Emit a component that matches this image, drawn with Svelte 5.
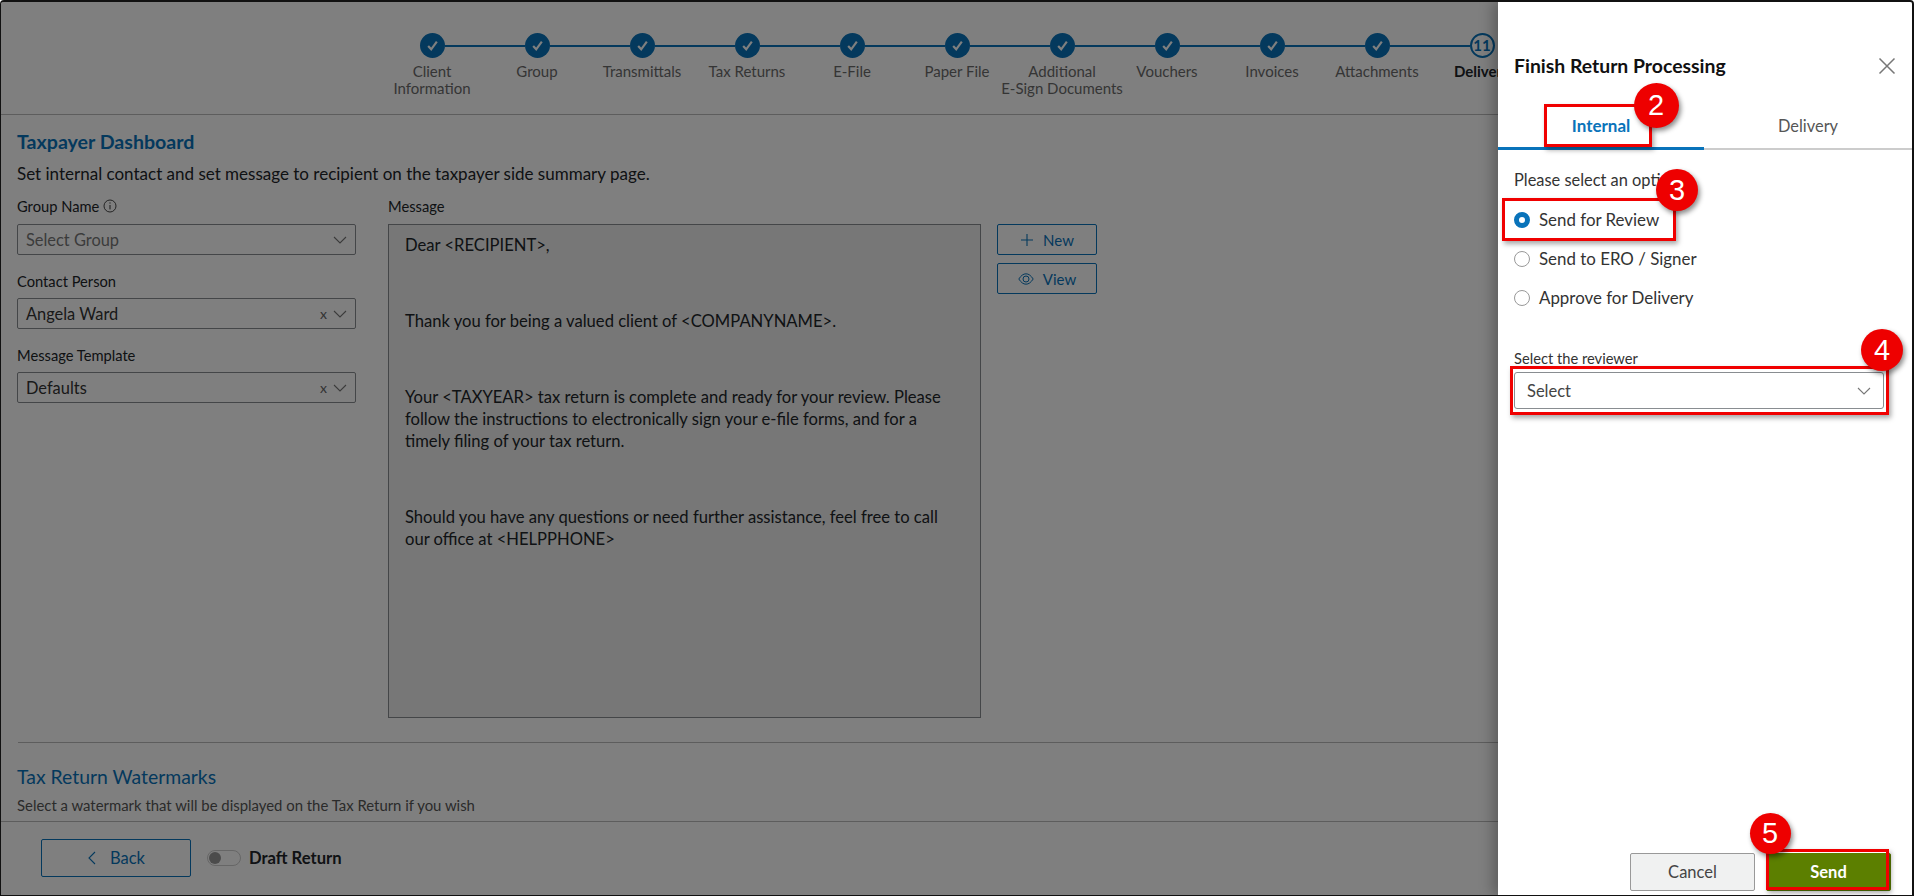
<script>
  const steps = [
    { lines: ['Client', 'Information'] },
    { lines: ['Group'] },
    { lines: ['Transmittals'] },
    { lines: ['Tax Returns'] },
    { lines: ['E-File'] },
    { lines: ['Paper File'] },
    { lines: ['Additional', 'E-Sign Documents'] },
    { lines: ['Vouchers'] },
    { lines: ['Invoices'] },
    { lines: ['Attachments'] },
    { lines: ['Delivery'], current: true, num: 11 }
  ];

  // screenshot callouts, placed on the picture itself
  const boxes = [
    { x: 1544, y: 104, w: 108, h: 43 },
    { x: 1502, y: 198, w: 174, h: 43 },
    { x: 1510, y: 366, w: 379, h: 49 },
    { x: 1766, y: 849, w: 123, h: 41 }
  ];
  const badges = [
    { n: 2, x: 1656, y: 105, d: 45 },
    { n: 3, x: 1677, y: 190, d: 42 },
    { n: 4, x: 1882, y: 350, d: 42 },
    { n: 5, x: 1770, y: 833, d: 41 }
  ];
</script>

<div class="frame">
  <div class="page">
    <header class="stepper">
      {#each steps as step, i}
        <div class="step" class:current={step.current}>
          <div class="dot" class:last={i === steps.length - 1}>
            {#if step.current}
              {step.num}
            {:else}
              <svg width="13" height="13" viewBox="0 0 12 12"><path d="M2 6.500 4.800 9.500 10 2.500" fill="none" stroke="#fff" stroke-width="2" /></svg>
            {/if}
          </div>
          {#each step.lines as line}
            <span class="step-label">{line}</span>
          {/each}
        </div>
      {/each}
    </header>

    <main class="content">
      <h2 class="section-title">Taxpayer Dashboard</h2>
      <p class="section-desc">Set internal contact and set message to recipient on the taxpayer side summary page.</p>

      <div class="dash-row">
        <div class="form-col">
          <div class="field">
            <label class="field-label">Group Name
              <svg class="info" width="14" height="14" viewBox="0 0 14 14"><circle cx="7" cy="7" r="6" fill="none" stroke="#333" stroke-width=".9" /><path d="M7 6v4.400M7 3.400v1.200" stroke="#333" stroke-width="1" /></svg>
            </label>
            <div class="select placeholder">
              <span>Select Group</span>
              <svg class="chev" width="14" height="8" viewBox="0 0 14 8"><path d="M1 1l6 6 6-6" fill="none" stroke="#777" stroke-width="1.100" /></svg>
            </div>
          </div>
          <div class="field">
            <label class="field-label">Contact Person</label>
            <div class="select">
              <span>Angela Ward</span>
              <span class="clear">x</span>
              <svg class="chev" width="14" height="8" viewBox="0 0 14 8"><path d="M1 1l6 6 6-6" fill="none" stroke="#777" stroke-width="1.100" /></svg>
            </div>
          </div>
          <div class="field">
            <label class="field-label">Message Template</label>
            <div class="select">
              <span>Defaults</span>
              <span class="clear">x</span>
              <svg class="chev" width="14" height="8" viewBox="0 0 14 8"><path d="M1 1l6 6 6-6" fill="none" stroke="#777" stroke-width="1.100" /></svg>
            </div>
          </div>
        </div>

        <div class="message-col">
          <label class="field-label">Message</label>
          <div class="message">
            <p>Dear &lt;RECIPIENT&gt;,</p>
            <p>Thank you for being a valued client of &lt;COMPANYNAME&gt;.</p>
            <p>Your &lt;TAXYEAR&gt; tax return is complete and ready for your review. Please follow the instructions to electronically sign your e-file forms, and for a timely filing of your tax return.</p>
            <p>Should you have any questions or need further assistance, feel free to call our office at &lt;HELPPHONE&gt;</p>
          </div>
        </div>

        <div class="side-btns">
          <button class="btn-outline">
            <svg width="14" height="14" viewBox="0 0 14 14"><path d="M7 1v12M1 7h12" stroke="#0973ba" stroke-width="1.100" /></svg>
            New
          </button>
          <button class="btn-outline">
            <svg width="16" height="14" viewBox="0 0 16 14"><path d="M.8 7C3 3.600 5.300 1.800 8 1.800S13 3.600 15.200 7C13 10.400 10.700 12.200 8 12.200S3 10.400.8 7z" fill="none" stroke="#0973ba" stroke-width="1" /><circle cx="8" cy="7" r="3" fill="none" stroke="#0973ba" stroke-width="1" /></svg>
            View
          </button>
        </div>
      </div>

      <hr class="divider" />

      <h2 class="section-title wm">Tax Return Watermarks</h2>
      <p class="section-sub">Select a watermark that will be displayed on the Tax Return if you wish</p>
    </main>

    <footer class="page-footer">
      <button class="btn-outline back">
        <svg width="9" height="14" viewBox="0 0 9 14"><path d="M8 1 2 7l6 6" fill="none" stroke="#0973ba" stroke-width="1.100" /></svg>
        Back
      </button>
      <span class="toggle"><span class="knob"></span></span>
      <span class="draft">Draft Return</span>
    </footer>
  </div>

  <div class="overlay"></div>

  <aside class="drawer">
    <div class="drawer-head">
      <h3>Finish Return Processing</h3>
      <svg class="close" width="18" height="18" viewBox="0 0 18 18"><path d="M1.500 1.500l15 15M16.500 1.500l-15 15" stroke="#777" stroke-width="1.500" /></svg>
    </div>

    <div class="tabs">
      <div class="tab active">Internal</div>
      <div class="tab">Delivery</div>
    </div>

    <div class="drawer-body">
      <p class="please">Please select an option</p>
      <div class="radio-row"><span class="radio on"></span>Send for Review</div>
      <div class="radio-row"><span class="radio"></span>Send to ERO / Signer</div>
      <div class="radio-row"><span class="radio"></span>Approve for Delivery</div>

      <label class="reviewer-label">Select the reviewer</label>
      <div class="reviewer">
        <span>Select</span>
        <svg width="14" height="8" viewBox="0 0 14 8"><path d="M1 1l6 6 6-6" fill="none" stroke="#777" stroke-width="1.100" /></svg>
      </div>
    </div>

    <div class="drawer-foot">
      <button class="cancel">Cancel</button>
      <button class="send">Send</button>
    </div>
  </aside>

  {#each boxes as b}
    <div class="callout-box" style="left:{b.x - 1}px;top:{b.y - 2}px;width:{b.w}px;height:{b.h}px"></div>
  {/each}
  {#each badges as b}
    <div class="badge" style="left:{b.x - b.d / 2 - 1}px;top:{b.y - b.d / 2 - 2}px;width:{b.d}px;height:{b.d}px">{b.n}</div>
  {/each}
</div>

<style>
  :global(body) {
    margin: 0;
    font-family: "Lato", "Liberation Sans", sans-serif;
    color: #212529;
  }

  .frame {
    position: relative;
    width: 1914px;
    height: 896px;
    box-sizing: border-box;
    border-style: solid;
    border-color: #111;
    border-width: 2px 2px 1px 1px;
    border-top-left-radius: 4px;
    border-top-right-radius: 4px;
    overflow: hidden;
    background: #fff;
  }

  .page {
    display: flex;
    flex-direction: column;
    height: 100%;
  }

  .stepper {
    display: flex;
    height: 113px;
    flex: none;
    padding-left: 378.500px;
    padding-top: 31px;
    box-sizing: border-box;
    border-bottom: 1px solid #bbb;
  }

  .step {
    position: relative;
    width: 105px;
    flex: none;
    display: flex;
    flex-direction: column;
    align-items: center;
    font-size: 15px;
    line-height: 17px;
    color: #6b6b6b;
  }

  .step.current {
    color: #212529;
    font-weight: 700;
  }

  .dot {
    position: relative;
    width: 25px;
    height: 25px;
    border-radius: 50%;
    background: #0973ba;
    display: flex;
    align-items: center;
    justify-content: center;
    margin-bottom: 5px;
    box-sizing: border-box;
  }

  .dot::after {
    content: "";
    position: absolute;
    left: 25px;
    top: 11.500px;
    width: 80px;
    height: 2px;
    background: #0973ba;
  }

  .dot.last::after {
    display: none;
  }

  .current .dot {
    background: #fff;
    border: 2px solid #0973ba;
    color: #0973ba;
    font-size: 15px;
    font-weight: 700;
  }

  .step-label {
    white-space: nowrap;
  }

  .content {
    flex: 1;
    min-height: 0;
    padding: 15px 0 0 16px;
    overflow: hidden;
  }

  .section-title {
    margin: 0;
    font-size: 19.600px;
    line-height: 24px;
    font-weight: 700;
    color: #0973ba;
  }

  .section-desc {
    margin: 9px 0 0;
    font-size: 17px;
    line-height: 22px;
  }

  .dash-row {
    display: flex;
    margin-top: 12px;
  }

  .form-col {
    width: 339px;
    margin-right: 32px;
    display: flex;
    flex-direction: column;
    gap: 17px;
  }

  .field-label {
    display: flex;
    align-items: center;
    gap: 4px;
    font-size: 14.700px;
    line-height: 18px;
    margin-bottom: 9px;
  }

  .field + .field .field-label {
    margin-bottom: 8px;
  }

  .select {
    display: flex;
    align-items: center;
    height: 31px;
    box-sizing: border-box;
    border: 1px solid #898d91;
    border-radius: 2px;
    padding: 0 8px;
    font-size: 16.400px;
    color: #333;
  }

  .select > span:first-child {
    flex: 1;
  }

  .select.placeholder {
    color: #777;
  }

  .clear {
    font-size: 14px;
    color: #666;
    margin-right: 6px;
  }

  .message-col {
    width: 593px;
    margin-right: 16px;
  }

  .message {
    height: 494px;
    box-sizing: border-box;
    border: 1px solid #898d91;
    background: #eee;
    padding: 9px 16px;
    font-size: 16.600px;
    line-height: 22px;
  }

  .message p {
    margin: 0 0 54px;
  }

  .side-btns {
    display: flex;
    flex-direction: column;
    gap: 8px;
    padding-top: 27px;
  }

  .btn-outline {
    display: flex;
    align-items: center;
    justify-content: center;
    gap: 9px;
    width: 100px;
    height: 31px;
    box-sizing: border-box;
    background: #fff;
    border: 1px solid #0973ba;
    border-radius: 2px;
    color: #0973ba;
    font: inherit;
    font-size: 15px;
    padding: 0;
  }

  .divider {
    border: 0;
    border-top: 1px solid #bbb;
    margin: 24px 0 0 1px;
  }

  .section-title.wm {
    font-size: 19.400px;
    font-weight: 400;
    margin-top: 22px;
  }

  .section-sub {
    margin: 7px 0 0;
    font-size: 14.900px;
    line-height: 18px;
    color: #565656;
  }

  .page-footer {
    height: 74px;
    flex: none;
    box-sizing: border-box;
    border-top: 1px solid #bbb;
    display: flex;
    align-items: center;
    padding: 0 0 2px 40px;
  }

  .back {
    width: 150px;
    height: 38px;
    font-size: 16.500px;
    gap: 14px;
  }

  .toggle {
    width: 34px;
    height: 16px;
    box-sizing: border-box;
    border: 1px solid #ccc;
    border-radius: 8px;
    margin-left: 16px;
    display: flex;
    align-items: center;
    padding-left: 1px;
  }

  .knob {
    width: 12px;
    height: 12px;
    border-radius: 50%;
    background: #999;
  }

  .draft {
    margin-left: 8px;
    font-size: 16.600px;
    font-weight: 700;
  }

  .overlay {
    position: absolute;
    inset: 0;
    background: rgba(0, 0, 0, .5);
  }

  .drawer {
    position: absolute;
    left: 1497px;
    top: 0;
    bottom: 0;
    width: 414px;
    background: #fff;
    box-shadow: -6px 0 12px rgba(0, 0, 0, .25);
    display: flex;
    flex-direction: column;
  }

  .drawer-head {
    display: flex;
    align-items: center;
    justify-content: space-between;
    height: 49px;
    padding: 39px 16px 0 16px;
    flex: none;
  }

  .drawer-head h3 {
    margin: 0;
    font-size: 19.400px;
    font-weight: 700;
    color: #111;
  }

  .tabs {
    display: flex;
    height: 60px;
    flex: none;
    box-sizing: border-box;
    border-bottom: 2px solid #ccc;
  }

  .tab {
    flex: 1;
    display: flex;
    align-items: center;
    justify-content: center;
    padding-top: 11px;
    font-size: 16.400px;
    color: #565656;
    margin-bottom: -2px;
  }

  .tab.active {
    flex: none;
    width: 206px;
    padding-top: 14px;
    box-sizing: border-box;
    font-size: 17px;
    color: #0973ba;
    font-weight: 700;
    border-bottom: 3px solid #0973ba;
  }

  .drawer-body {
    flex: 1;
    padding: 20px 0 0 16px;
  }

  .please {
    margin: 0 0 10px;
    font-size: 16.400px;
    line-height: 20px;
    color: #333;
  }

  .radio-row {
    display: flex;
    align-items: center;
    gap: 9px;
    height: 39px;
    font-size: 16.900px;
    color: #333;
  }

  .radio {
    width: 16px;
    height: 16px;
    box-sizing: border-box;
    border: 1px solid #999;
    border-radius: 50%;
  }

  .radio.on {
    border: 5px solid #0973ba;
  }

  .reviewer-label {
    display: block;
    margin-top: 32px;
    font-size: 14.700px;
    line-height: 18px;
    color: #333;
  }

  .reviewer {
    display: flex;
    align-items: center;
    justify-content: space-between;
    width: 370px;
    height: 37px;
    box-sizing: border-box;
    border: 1px solid #898d91;
    border-radius: 3px;
    padding: 0 12px;
    margin-top: 5px;
    font-size: 16.500px;
    color: #444;
  }

  .drawer-foot {
    display: flex;
    justify-content: flex-end;
    gap: 11px;
    padding: 0 21px 4px 0;
    flex: none;
  }

  .drawer-foot button {
    width: 125px;
    height: 38px;
    box-sizing: border-box;
    border-radius: 2px;
    font: inherit;
    font-size: 16.500px;
    padding: 0;
  }

  .cancel {
    background: #f0f1f1;
    border: 1px solid #999;
    color: #444;
  }

  .drawer-foot .send {
    background: #5c7f00;
    border: 1px solid #5c7f00;
    color: #fff;
    font-weight: 700;
  }

  .callout-box {
    position: absolute;
    box-sizing: border-box;
    border: 3px solid #f00000;
    box-shadow: 2px 3px 5px rgba(0, 0, 0, .35);
  }

  .badge {
    position: absolute;
    display: flex;
    align-items: center;
    justify-content: center;
    border-radius: 50%;
    background: #ee0000;
    color: #fff;
    font-family: "Liberation Sans", sans-serif;
    font-size: 29px;
    box-shadow: 2px 3px 5px rgba(0, 0, 0, .45);
  }
</style>
